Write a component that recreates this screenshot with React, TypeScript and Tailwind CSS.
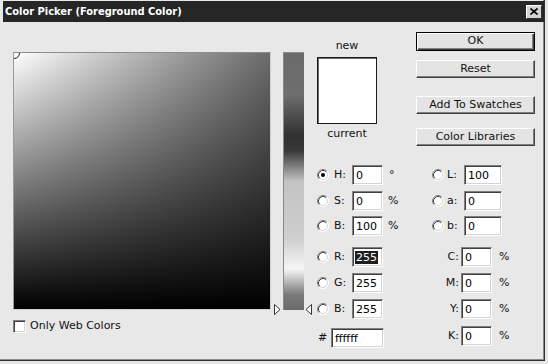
import React from "react";

const font = { fontFamily: '"DejaVu Sans", Verdana, sans-serif' };

const Radio = ({ checked = false }: { checked?: boolean }) => (
  <svg width="12" height="12" viewBox="0 0 12 12" className="shrink-0">
    <circle cx="6" cy="6" r="5.5" fill="#fff" />
    <path d="M2.11 9.89 A5.5 5.5 0 0 1 9.89 2.11" fill="none" stroke="#808080" strokeWidth="1" />
    <path d="M2.82 9.18 A4.5 4.5 0 0 1 9.18 2.82" fill="none" stroke="#404040" strokeWidth="1" />
    <path d="M9.89 2.11 A5.5 5.5 0 0 1 2.11 9.89" fill="none" stroke="#ffffff" strokeWidth="1" />
    <path d="M9.18 2.82 A4.5 4.5 0 0 1 2.82 9.18" fill="none" stroke="#d4d4d4" strokeWidth="1" />
    {checked && <circle cx="6" cy="6" r="2" fill="#000" />}
  </svg>
);

const Field = ({
  value,
  w = "w-[31px]",
  selected = false,
}: {
  value: string;
  w?: string;
  selected?: boolean;
}) => (
  <div
    className={`${w} h-5 shrink-0 bg-white border border-t-[#808080] border-l-[#808080] border-r-white border-b-white shadow-[inset_1px_1px_0_#404040,inset_-1px_-1px_0_#d4d4d4] flex items-center pl-[3px] text-[11px] leading-none text-black`}
  >
    {selected ? <span className="bg-[#1e1e1e] text-white px-[1px] -ml-[1px] py-[1px]">{value}</span> : value}
  </div>
);

const Button = ({ label, primary = false, className = "" }: { label: string; primary?: boolean; className?: string }) => (
  <div
    className={`w-[119px] flex items-center justify-center text-[11px] text-[#111] bg-[#e4e4e4] ${
      primary
        ? "h-[19px] border border-black shadow-[inset_1px_1px_0_#fff,inset_-1px_-1px_0_#404040,inset_-2px_-2px_0_#808080]"
        : "h-[18px] border border-t-white border-l-white border-r-[#404040] border-b-[#404040] shadow-[inset_-1px_-1px_0_#808080]"
    } ${className}`}
  >
    {label}
  </div>
);

const Marker = ({ dir }: { dir: "right" | "left" }) => (
  <svg width="7" height="11" viewBox="0 0 7 11">
    {dir === "right" ? (
      <path d="M0.5 0.5 L6 5.5 L0.5 10.5 Z" fill="#fff" stroke="#333" strokeWidth="1" />
    ) : (
      <path d="M6.5 0.5 L1 5.5 L6.5 10.5 Z" fill="#fff" stroke="#333" strokeWidth="1" />
    )}
  </svg>
);

export default function App() {
  return (
    <div className="w-[548px] h-[364px] bg-[#e6e6e6] overflow-hidden" style={font}>
      <div className="w-[545px] h-[361px] bg-[#e8e8e8] border-r border-b border-[#303030] shadow-[inset_-1px_-1px_0_#8a8a8a] flex flex-col">
        {/* title bar */}
        <div className="mt-[1px] ml-[3px] h-[21px] bg-[#262626] flex items-center justify-between pl-[2px] pr-[2px]">
          <span className="text-white font-bold font-stretch-condensed text-[11px] leading-none">Color Picker (Foreground Color)</span>
          <div className="w-[16px] h-[14px] bg-[#d4d4d4] border border-t-white border-l-white border-r-[#303030] border-b-[#303030] flex items-center justify-center">
            <svg width="8" height="7" viewBox="0 0 8 7">
              <path d="M0.5 0.5 L7.5 6.5 M7.5 0.5 L0.5 6.5" stroke="#000" strokeWidth="1.6" />
            </svg>
          </div>
        </div>

        {/* body */}
        <div className="flex pl-[13px]">
          {/* color field */}
          <div className="w-[258px] flex flex-col">
            <div className="mt-[30px] w-[258px] h-[258px] border border-t-[#8c8c8c] border-l-[#9a9a9a] border-r-[#cfcfcf] border-b-[#cfcfcf] relative overflow-hidden bg-linear-to-r from-white to-[#6b6b6b]">
              <div className="absolute inset-0 bg-linear-to-b from-transparent to-black" />
              <div className="absolute -left-[6px] -top-[6px] w-[12px] h-[12px] rounded-full border border-[#222]" />
            </div>
            <div className="flex items-center mt-[8px]">
              <div className="w-[13px] h-[13px] bg-white border border-t-[#808080] border-l-[#808080] border-r-white border-b-white shadow-[inset_1px_1px_0_#404040,inset_-1px_-1px_0_#d4d4d4]" />
              <span className="ml-[4px] text-[11px] text-[#111]">Only Web Colors</span>
            </div>
          </div>

          {/* hue slider */}
          <div className="ml-[12px] mt-[30px] relative w-[21px] h-[258px] border-t border-t-[#8c8c8c] border-l border-l-[#8a8a8a] bg-[linear-gradient(to_bottom,#6b6b6b_0%,#6e6e6e_16%,#313131_32%,#373737_38%,#c4c4c4_50%,#cecece_72%,#f6f6f6_84%,#7a7a7a_94%,#6a6a6a_100%)]">
            <div className="absolute -left-[10px] bottom-[-5px]">
              <Marker dir="right" />
            </div>
            <div className="absolute -right-[8px] bottom-[-5px]">
              <Marker dir="left" />
            </div>
          </div>

          {/* right side */}
          <div className="ml-[13px] mt-[10px] w-[218px] flex flex-col text-[11px] text-[#111]">
            <div className="flex">
              <div className="w-[60px] flex flex-col items-center">
                <span className="mt-[7px] leading-[13px]">new</span>
                <div className="mt-[5px] w-[60px] h-[67px] bg-white border border-[#1a1a1a] shadow-[inset_1px_1px_0_#6a6a6a]" />
                <span className="mt-[3px] leading-[13px]">current</span>
              </div>
              <div className="ml-auto flex flex-col">
                <Button label="OK" primary />
                <Button label="Reset" className="mt-[9px]" />
                <Button label="Add To Swatches" className="mt-[18px]" />
                <Button label="Color Libraries" className="mt-[14px]" />
              </div>
            </div>

            <div className="mt-[19px] flex">
              {/* left fields */}
              <div className="w-[115px] flex flex-col">
                <div className="h-5 flex items-center">
                  <Radio checked />
                  <span className="ml-[5px] w-[18px]">H:</span>
                  <Field value="0" />
                  <span className="ml-[6px]">°</span>
                </div>
                <div className="h-5 flex items-center mt-[6px]">
                  <Radio />
                  <span className="ml-[5px] w-[18px]">S:</span>
                  <Field value="0" />
                  <span className="ml-[5px]">%</span>
                </div>
                <div className="h-5 flex items-center mt-[5px]">
                  <Radio />
                  <span className="ml-[5px] w-[18px]">B:</span>
                  <Field value="100" />
                  <span className="ml-[5px]">%</span>
                </div>
                <div className="h-5 flex items-center mt-[11px]">
                  <Radio />
                  <span className="ml-[5px] w-[18px]">R:</span>
                  <Field value="255" selected />
                </div>
                <div className="h-5 flex items-center mt-[6px]">
                  <Radio />
                  <span className="ml-[5px] w-[18px]">G:</span>
                  <Field value="255" />
                </div>
                <div className="h-5 flex items-center mt-[6px]">
                  <Radio />
                  <span className="ml-[5px] w-[18px]">B:</span>
                  <Field value="255" />
                </div>
                <div className="h-5 flex items-center mt-[9px]">
                  <span className="ml-[1px] w-[13px]">#</span>
                  <Field value="ffffff" w="w-[53px]" />
                </div>
              </div>

              {/* right fields */}
              <div className="flex flex-col">
                <div className="h-5 flex items-center">
                  <Radio />
                  <span className="ml-[3px] w-[17px]">L:</span>
                  <Field value="100" w="w-[38px]" />
                </div>
                <div className="h-5 flex items-center mt-[6px]">
                  <Radio />
                  <span className="ml-[3px] w-[17px]">a:</span>
                  <Field value="0" w="w-[38px]" />
                </div>
                <div className="h-5 flex items-center mt-[5px]">
                  <Radio />
                  <span className="ml-[3px] w-[17px]">b:</span>
                  <Field value="0" w="w-[38px]" />
                </div>
                {(["C", "M", "Y", "K"] as const).map((l, i) => (
                  <div key={l} className={`h-5 flex items-center ${i === 0 ? "mt-[11px]" : i === 3 ? "mt-[7px]" : "mt-[6px]"}`}>
                    <span className="w-[29px] pr-[2px] text-right">{l}:</span>
                    <Field value="0" />
                    <span className="ml-[7px]">%</span>
                  </div>
                ))}
              </div>
            </div>
          </div>
        </div>
      </div>
    </div>
  );
}
